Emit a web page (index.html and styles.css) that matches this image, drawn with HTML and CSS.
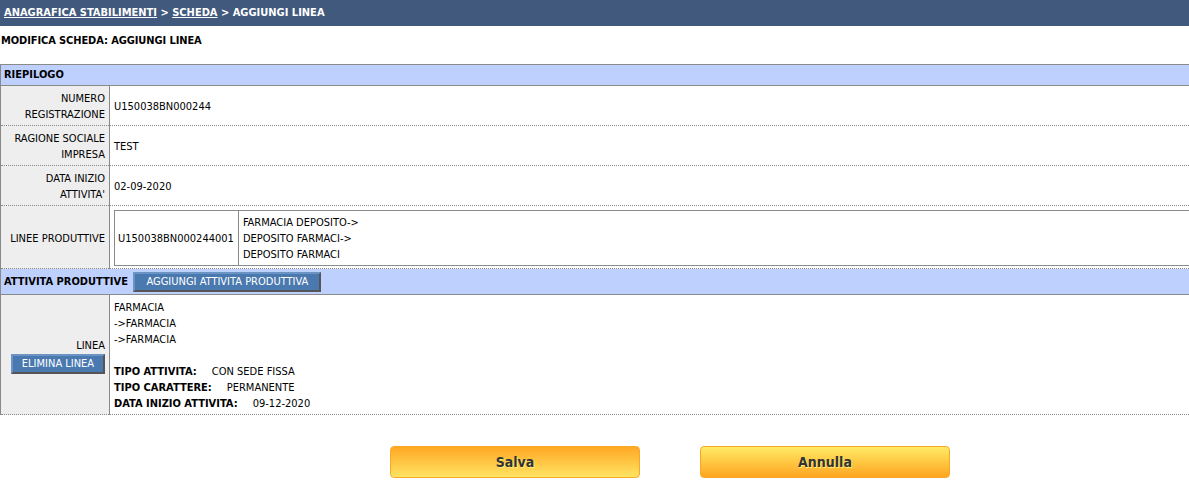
FILE: index.html
```html
<!DOCTYPE html>
<html lang="it">
<head>
<meta charset="utf-8">
<title>Aggiungi linea</title>
<link rel="stylesheet" href="styles.css">
</head>
<body>
<div class="breadcrumb"><a href="#">ANAGRAFICA STABILIMENTI</a> &gt; <a href="#">SCHEDA</a> &gt; AGGIUNGI LINEA</div>
<h1 class="page-title">MODIFICA SCHEDA: AGGIUNGI LINEA</h1>
<table class="detail">
  <tr class="section"><th colspan="2">RIEPILOGO</th></tr>
  <tr>
    <td class="label">NUMERO<br>REGISTRAZIONE</td>
    <td class="value">U150038BN000244</td>
  </tr>
  <tr>
    <td class="label">RAGIONE SOCIALE<br>IMPRESA</td>
    <td class="value">TEST</td>
  </tr>
  <tr>
    <td class="label">DATA INIZIO<br>ATTIVITA'</td>
    <td class="value">02-09-2020</td>
  </tr>
  <tr>
    <td class="label">LINEE PRODUTTIVE</td>
    <td class="value nested-cell">
      <table class="nested">
        <tr>
          <td class="code">U150038BN000244001</td>
          <td>FARMACIA DEPOSITO-&gt;<br>DEPOSITO FARMACI-&gt;<br>DEPOSITO FARMACI</td>
        </tr>
      </table>
    </td>
  </tr>
  <tr class="section section-action">
    <th colspan="2">ATTIVITA PRODUTTIVE <button class="btn-blue" type="button">AGGIUNGI ATTIVITA PRODUTTIVA</button></th>
  </tr>
  <tr>
    <td class="label">LINEA<br><button class="btn-blue btn-small" type="button">ELIMINA LINEA</button></td>
    <td class="value">
      FARMACIA<br>-&gt;FARMACIA<br>-&gt;FARMACIA<br><br>
      <b>TIPO ATTIVITA:</b><span class="val">CON SEDE FISSA</span><br>
      <b>TIPO CARATTERE:</b><span class="val">PERMANENTE</span><br>
      <b>DATA INIZIO ATTIVITA:</b><span class="val">09-12-2020</span>
    </td>
  </tr>
</table>
<div class="actions">
  <button class="btn-yellow btn-save" type="button">Salva</button>
  <button class="btn-yellow btn-cancel" type="button">Annulla</button>
</div>
</body>
</html>
```

FILE: styles.css
```css
html, body {
  margin: 0;
  padding: 0;
  background: #ffffff;
}
body {
  font-family: "DejaVu Sans Condensed", "DejaVu Sans", sans-serif;
  font-stretch: condensed;
  font-size: 11px;
  line-height: 16px;
  color: #000;
  overflow: hidden;
}
.breadcrumb {
  box-sizing: border-box;
  height: 26px;
  padding: 5px 4px 0;
  background: #40597c;
  color: #fff;
  font-weight: bold;
}
.breadcrumb a {
  color: #fff;
  text-decoration: underline;
}
.page-title {
  margin: 7px 0 15px 1px;
  font-size: 11px;
  line-height: 16px;
  font-weight: bold;
  letter-spacing: -0.1px;
}
.detail {
  width: 100%;
  border-collapse: collapse;
  border-left: 1px solid #8a8a8a;
}
.detail td {
  border-bottom: 1px dotted #8a8a8a;
}
.section th {
  background: #bdd0fe;
  text-align: left;
  font-weight: bold;
  padding: 2px 3px 2px;
  border-top: 1px solid #8a8a8a;
  border-bottom: 1px solid #8a8a8a;
}
.section-action th {
  border-top: none;
  padding: 3px 3px 2px;
  line-height: 20px;
}
.label {
  width: 104px;
  background: #eeeeee;
  text-align: right;
  vertical-align: middle;
  padding: 5px 4px 2px 0;
  border-right: 1px solid #8a8a8a;
  white-space: nowrap;
}
.value {
  padding: 5px 4px 2px;
  vertical-align: middle;
}
.nested-cell {
  padding: 4px 0 2px 4px;
}
.nested {
  width: 100%;
  border-collapse: collapse;
  border-top: 1px solid #8a8a8a;
  border-bottom: 1px solid #8a8a8a;
  border-left: 1px solid #8a8a8a;
}
.nested td {
  border-bottom: none;
  padding: 4px 4px 2px;
}
.nested .code {
  width: 112px;
  padding-left: 3px;
  border-right: 1px solid #8a8a8a;
  white-space: nowrap;
}
.val {
  margin-left: 15px;
}
.btn-blue {
  font-family: inherit;
  font-stretch: condensed;
  font-size: 11px;
  line-height: 14px;
  height: 20px;
  padding: 0 11px;
  margin: 0 0 0 2px;
  color: #fff;
  background: #4a79b0;
  border: 2px solid;
  border-color: #6b93c4 #555 #555 #6b93c4;
  vertical-align: top;
  cursor: pointer;
}
.btn-small {
  margin: 0;
  width: 94px;
  padding: 0;
}
.actions {
  display: flex;
  gap: 60px;
  padding: 31px 0 0 390px;
}
.btn-yellow {
  width: 250px;
  height: 32px;
  border: 1px solid #f9a825;
  border-radius: 4px;
  font-family: "DejaVu Sans Condensed", "DejaVu Sans", sans-serif;
  font-stretch: condensed;
  font-weight: bold;
  font-size: 14px;
  color: #333;
  text-shadow: 1px 1px 0 #fff07a;
  cursor: pointer;
}
.btn-save {
  background: linear-gradient(to bottom, #ffa824, #ffe463);
}
.btn-cancel {
  background: linear-gradient(to bottom, #ffea65, #ffa520);
}
```
